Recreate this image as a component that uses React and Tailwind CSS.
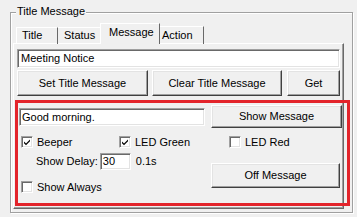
import React from "react";

const btn =
  "flex items-center justify-center bg-[#f0f0f0] border border-t-white border-l-white border-r-[#404040] border-b-[#404040] shadow-[inset_-1px_-1px_0_#a0a0a0,inset_1px_1px_0_#e3e3e3] text-[11px] leading-[13px] text-black";

const edit =
  "bg-white border border-t-[#a0a0a0] border-l-[#a0a0a0] border-r-white border-b-white shadow-[inset_1px_1px_0_#696969,inset_-1px_-1px_0_#e3e3e3] text-[11px] leading-[13px] text-black";

function Check({ checked }) {
  return (
    <span className="w-[12px] h-[12px] bg-white border border-t-[#a0a0a0] border-l-[#a0a0a0] border-r-white border-b-white shadow-[inset_1px_1px_0_#696969,inset_-1px_-1px_0_#e3e3e3] flex items-center justify-center shrink-0">
      {checked && (
        <svg width="8" height="8" viewBox="0 0 8 8">
          <path d="M1 3.5 L3 5.5 L7 1.5 L7 3.2 L3 7.2 L1 5.2 Z" fill="#000" />
        </svg>
      )}
    </span>
  );
}

function CheckItem({ checked, label, className = "" }) {
  return (
    <div className={"flex items-center gap-[4px] " + className}>
      <Check checked={checked} />
      <span className="text-[11px] leading-[13px]">{label}</span>
    </div>
  );
}

export default function App() {
  return (
    <div
      className="w-[357px] h-[217px] bg-[#f0f0f0] relative overflow-hidden text-black"
      style={{ fontFamily: '"Liberation Sans", Arial, sans-serif' }}
    >
      <div className="pt-[12px] pl-[10px]">
        <div className="relative w-[343px] h-[201px] border border-[#a0a0a0] shadow-[inset_1px_1px_0_#fff,1px_1px_0_#fff]">
          <span className="absolute left-[5px] top-[-8px] px-[1px] bg-[#f0f0f0] text-[11px] leading-[13px]">
            Title Message
          </span>
          <div className="pl-[2px] pt-[10px]">
            <div className="flex items-end h-[21px] pl-[3px]">
              <div className="w-[42px] h-[17px] pl-[5px] border-t border-l border-t-white border-l-white border-r border-r-[#696969] text-[11px] leading-[15px]">
                Title
              </div>
              <div className="w-[42px] h-[17px] pl-[6px] border-t border-t-white text-[11px] leading-[15px]">
                Status
              </div>
              <div className="relative z-10 w-[60px] h-[21px] pl-[8px] bg-[#f0f0f0] border-t border-l border-t-white border-l-white border-r border-r-[#696969] text-[11px] leading-[17px]">
                Message
              </div>
              <div className="w-[44px] h-[18px] pl-[2px] border-t border-t-white border-r border-r-[#696969] text-[11px] leading-[16px]">
                Action
              </div>
            </div>
            <div className="-mt-px w-[331px] h-[166px] border border-t-white border-l-white border-r-[#696969] border-b-[#696969] shadow-[inset_-1px_-1px_0_#a0a0a0]">
              <div className="pl-[3px] pt-[5px]">
                <div className={edit + " w-[323px] h-[19px] pl-[3px] pt-[2px]"}>
                  Meeting Notice
                </div>
                <div className="flex mt-[2px]">
                  <div className={btn + " w-[131px] h-[26px]"}>Set Title Message</div>
                  <div className={btn + " w-[130px] h-[26px] ml-[4px]"}>Clear Title Message</div>
                  <div className={btn + " w-[53px] h-[26px] ml-[5px]"}>Get</div>
                </div>
                <div className="ml-[2px] mt-[9px]">
                  <div className="flex items-start">
                    <div className={edit + " w-[186px] h-[18px] mt-[3px] pl-[2px] pt-[2px]"}>
                      Good morning.
                    </div>
                    <div className={btn + " w-[131px] h-[23px] ml-[6px]"}>Show Message</div>
                  </div>
                  <div className="flex items-center h-[16px] mt-[6px] pl-[2px]">
                    <CheckItem checked label="Beeper" className="w-[98px]" />
                    <CheckItem checked label="LED Green" className="w-[110px]" />
                    <CheckItem label="LED Red" />
                  </div>
                  <div className="flex">
                    <div className="w-[192px]">
                      <div className="flex items-center mt-[3px] pl-[17px]">
                        <span className="text-[11px] leading-[13px]">Show Delay:</span>
                        <div className={edit + " w-[31px] h-[17px] ml-[2px] pl-[2px] pt-[1px] text-[10px]"}>
                          30
                        </div>
                        <span className="text-[11px] leading-[13px] ml-[5px]">0.1s</span>
                      </div>
                      <div className="flex items-center h-[16px] mt-[9px] pl-[2px]">
                        <CheckItem label="Show Always" />
                      </div>
                    </div>
                    <div className={btn + " w-[129px] h-[25px] mt-[13px]"}>Off Message</div>
                  </div>
                </div>
              </div>
            </div>
          </div>
        </div>
      </div>
      <div className="absolute left-[15px] top-[100px] w-[335px] h-[106px] border-[3px] border-[#e3242b] pointer-events-none" />
    </div>
  );
}
